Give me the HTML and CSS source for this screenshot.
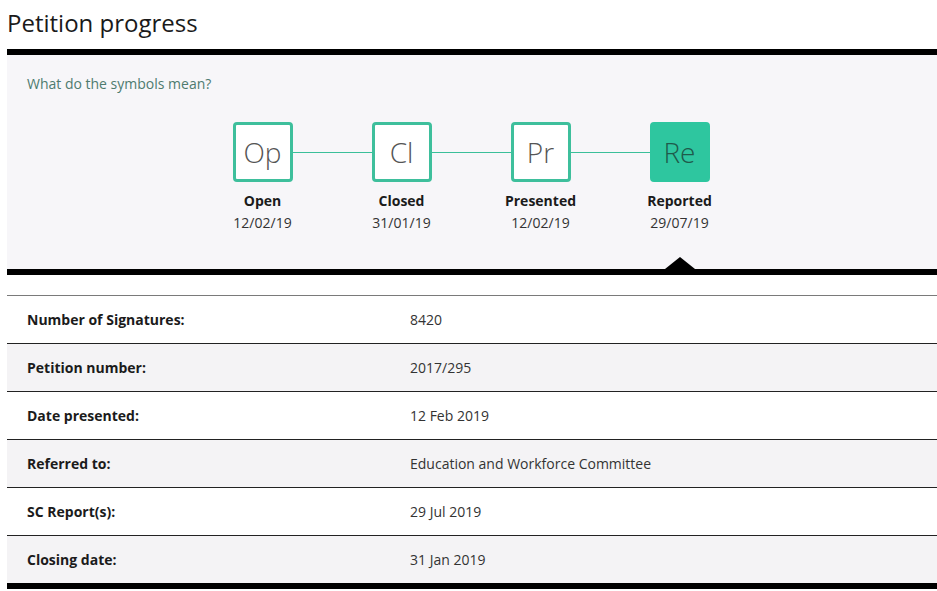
FILE: index.html
```html
<!DOCTYPE html>
<html lang="en">
<head>
  <meta charset="UTF-8">
  <meta name="viewport" content="width=device-width, initial-scale=1.0">
  <title>Petition progress</title>
  <link rel="stylesheet" href="styles.css">
</head>
<body>

  <h1 class="title">Petition progress</h1>

  <div class="progress">
    <a href="#" class="symbols-link">What do the symbols mean?</a>

    <div class="steps">
      <div class="step done">
        <div class="symbol">Op</div>
        <div class="step-name">Open</div>
        <div class="step-date">12/02/19</div>
      </div>
      <div class="step done">
        <div class="symbol">Cl</div>
        <div class="step-name">Closed</div>
        <div class="step-date">31/01/19</div>
      </div>
      <div class="step done">
        <div class="symbol">Pr</div>
        <div class="step-name">Presented</div>
        <div class="step-date">12/02/19</div>
      </div>
      <div class="step current">
        <div class="symbol">Re</div>
        <div class="step-name">Reported</div>
        <div class="step-date">29/07/19</div>
        <div class="marker"></div>
      </div>
    </div>
  </div>

  <div class="details">
    <div class="row">
      <div class="label">Number of Signatures:</div>
      <div class="value">8420</div>
    </div>
    <div class="row">
      <div class="label">Petition number:</div>
      <div class="value">2017/295</div>
    </div>
    <div class="row">
      <div class="label">Date presented:</div>
      <div class="value">12 Feb 2019</div>
    </div>
    <div class="row">
      <div class="label">Referred to:</div>
      <div class="value">Education and Workforce Committee</div>
    </div>
    <div class="row">
      <div class="label">SC Report(s):</div>
      <div class="value">29 Jul 2019</div>
    </div>
    <div class="row">
      <div class="label">Closing date:</div>
      <div class="value">31 Jan 2019</div>
    </div>
  </div>

</body>
</html>
```

FILE: styles.css
```css
body {
  margin: 0 0 0 7px;
  font-family: "Open Sans", Arial, sans-serif;
  font-size: 14px;
  line-height: 20px;
  color: #1b1b1b;
  background: #fff;
}

.title {
  margin: 7px 0 10px;
  font-size: 24px;
  line-height: 32px;
  font-weight: 400;
  color: #1a1a1a;
}

/* progress panel */
.progress {
  background: #f7f6f9;
  border-top: 6px solid #000;
  border-bottom: 6px solid #000;
  padding: 19px 0 0 20px;
}

.symbols-link {
  display: block;
  color: #4e7b6f;
  text-decoration: none;
}

.symbols-link:hover {
  text-decoration: underline;
}

.steps {
  display: flex;
  margin: 28px 0 0 166px;
}

.step {
  position: relative;
  width: 139px;
  display: flex;
  flex-direction: column;
  align-items: center;
  padding-bottom: 35px;
}

.step.current {
  padding-bottom: 0;
}

.symbol {
  width: 54px;
  height: 54px;
  border: 3px solid #3ebf9c;
  border-radius: 4px;
  background: #fff;
  display: flex;
  align-items: center;
  justify-content: center;
  font-size: 28px;
  font-weight: 300;
  color: #555;
}

.current .symbol {
  background: #2ec69f;
  border-color: #2ec69f;
  color: #1f5a4b;
}

/* line joining one symbol to the next */
.step:not(:last-child)::after {
  content: "";
  position: absolute;
  top: 30px;
  left: calc(50% + 30px);
  width: 79px;
  height: 1px;
  background: #3bbf9a;
}

.step-name {
  margin-top: 8px;
  font-weight: 700;
  line-height: 22px;
}

.step-date {
  line-height: 22px;
  color: #333;
}

.marker {
  margin-top: 23px;
  width: 0;
  height: 0;
  border-left: 15px solid transparent;
  border-right: 15px solid transparent;
  border-bottom: 12px solid #000;
}

/* details table */
.details {
  margin-top: 20px;
  border-top: 1px solid #7a7a7a;
  border-bottom: 6px solid #000;
}

.row {
  display: grid;
  grid-template-columns: 383px 1fr;
  align-items: center;
  height: 47px;
  padding-left: 20px;
}

.row + .row {
  border-top: 1px solid #222;
}

.row:nth-child(even) {
  background: #f4f3f5;
}

.label {
  font-weight: 700;
}

.value {
  color: #333;
}
```
